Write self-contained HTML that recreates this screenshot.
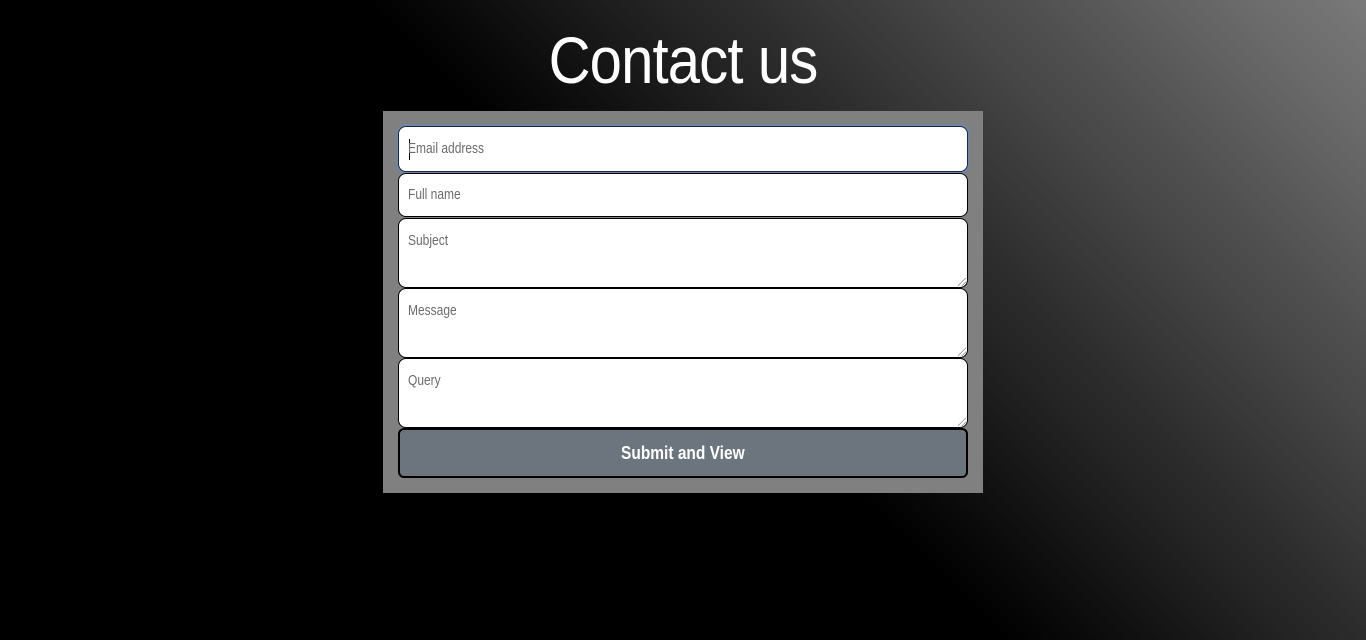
<!DOCTYPE html>
<html><head><meta charset="utf-8"><style>
html,body{margin:0;padding:0}
body{width:1366px;height:640px;overflow:hidden;background:linear-gradient(45deg,#000 50%,#7a7a7a 100%);font-family:"Liberation Sans",sans-serif;position:relative}
h1{position:absolute;top:22px;left:0;width:1366px;text-align:center;margin:0;color:#fff;font-size:66px;font-weight:normal;letter-spacing:-1px;transform:scaleX(0.88)}
.form{position:absolute;left:383px;top:111px;width:600px;height:382px;background:#808080}
.f{position:absolute;left:15px;width:570px;background:#fff;border:1.5px solid #000;border-radius:8px;color:#6c6c6c;font-size:15px;box-sizing:border-box}
.f span{position:absolute;left:9px;transform:scaleX(0.8);transform-origin:left center;white-space:nowrap}
.btn{position:absolute;left:15px;top:317px;width:570px;height:50px;box-sizing:border-box;background:#6c757d;border:2px solid #000;border-radius:6px;color:#fff;font-size:18px;font-weight:600;text-align:center;line-height:46px}
.btn span{display:inline-block;transform:scaleX(0.86)}
.cur{position:absolute;left:10px;top:12px;width:1px;height:21px;background:#000}
.rs{position:absolute;right:1px;bottom:1px;width:8px;height:8px;background:linear-gradient(135deg,transparent 45%,#888 45%,#888 52%,transparent 52%,transparent 70%,#888 70%,#888 77%,transparent 77%)}
</style></head><body>
<h1>Contact us</h1>
<div class="form">
 <div class="f" style="top:15px;height:46px;border-color:#1b2a44;box-shadow:0 0 0 2px #6f85a8"><div class="cur"></div><span style="top:13px">Email address</span></div>
 <div class="f" style="top:62px;height:44px"><span style="top:12px">Full name</span></div>
 <div class="f" style="top:107px;height:70px"><span style="top:13px">Subject</span><div class="rs"></div></div>
 <div class="f" style="top:177px;height:70px"><span style="top:13px">Message</span><div class="rs"></div></div>
 <div class="f" style="top:247px;height:70px"><span style="top:13px">Query</span><div class="rs"></div></div>
 <div class="btn"><span>Submit and View</span></div>
</div>
</body></html>
